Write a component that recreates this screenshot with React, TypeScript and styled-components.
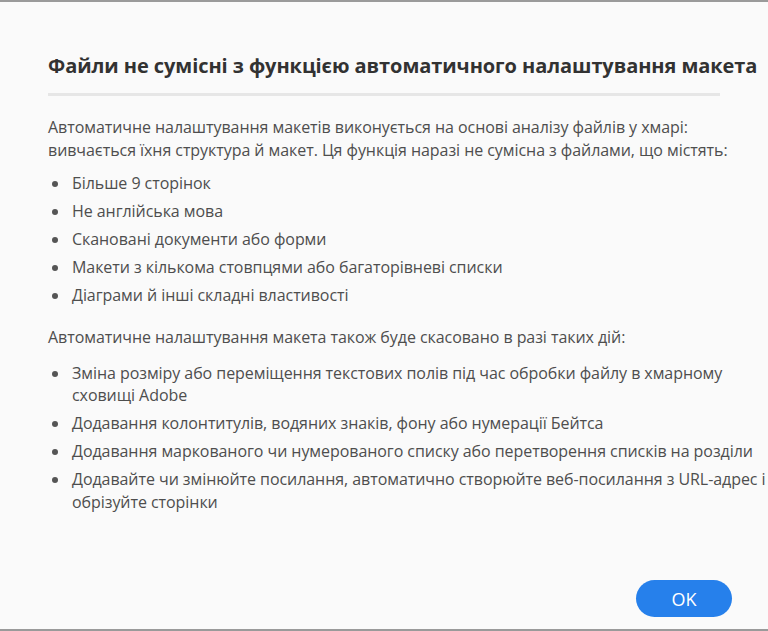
import React from 'react'
import styled, { createGlobalStyle } from 'styled-components'

const GlobalStyle = createGlobalStyle`
  html, body {
    margin: 0;
    padding: 0;
    background: #fafafa;
  }
  body {
    font-family: 'Open Sans', 'Noto Sans', sans-serif;
  }
`

const Dialog = styled.div`
  box-sizing: border-box;
  width: 768px;
  height: 631px;
  overflow: hidden;
  background: #fafafa;
  border-top: 2px solid #9a9a9a;
  border-bottom: 2px solid #9a9a9a;
  padding: 48px 0 12px 48px;
  display: flex;
  flex-direction: column;
`

const Title = styled.h2`
  margin: 0;
  font-size: 20px;
  font-weight: 700;
  line-height: 32px;
  letter-spacing: -0.07px;
  color: #323232;
  white-space: nowrap;
`

const Divider = styled.div`
  height: 3px;
  width: 672px;
  background: #e6e6e6;
  margin: 11px 0 20px;
`

const Body = styled.div`
  flex: 1;
  width: 720px;
  font-size: 16px;
  line-height: 23px;
  letter-spacing: -0.06px;
  color: #4e4e4e;
`

const Para = styled.p`
  margin: 0;
`

const List = styled.ul<{ $top: number }>`
  margin: ${({ $top }) => $top}px 0 19px;
  padding: 0;
  list-style: none;
`

const Item = styled.li`
  position: relative;
  padding-left: 24px;
  margin-bottom: 5.5px;
  line-height: 22.5px;

  &:before {
    content: '';
    position: absolute;
    left: 4px;
    top: 9px;
    width: 6px;
    height: 6px;
    border-radius: 50%;
    background: #555;
  }
`

const Footer = styled.div`
  display: flex;
  justify-content: flex-end;
  padding-right: 36px;
`

const OkButton = styled.button`
  width: 96px;
  height: 37px;
  border: none;
  border-radius: 19px;
  background: #2680eb;
  color: #fff;
  font-family: 'Open Sans', sans-serif;
  font-size: 18px;
  cursor: pointer;
`

const unsupported = [
  'Більше 9 сторінок',
  'Не англійська мова',
  'Скановані документи або форми',
  'Макети з кількома стовпцями або багаторівневі списки',
  'Діаграми й інші складні властивості',
]

const cancelled = [
  'Зміна розміру або переміщення текстових полів під час обробки файлу в хмарному сховищі Adobe',
  'Додавання колонтитулів, водяних знаків, фону або нумерації Бейтса',
  'Додавання маркованого чи нумерованого списку або перетворення списків на розділи',
  'Додавайте чи змінюйте посилання, автоматично створюйте веб-посилання з URL-адрес і обрізуйте сторінки',
]

const App = () => (
  <>
    <GlobalStyle />
    <Dialog>
      <Title>Файли не сумісні з функцією автоматичного налаштування макета</Title>
      <Divider />
      <Body>
        <Para>
          Автоматичне налаштування макетів виконується на основі аналізу файлів у хмарі:
          <br />
          вивчається їхня структура й макет. Ця функція наразі не сумісна з файлами, що містять:
        </Para>
        <List $top={10}>
          {unsupported.map((t) => (
            <Item key={t}>{t}</Item>
          ))}
        </List>
        <Para>Автоматичне налаштування макета також буде скасовано в разі таких дій:</Para>
        <List $top={13}>
          {cancelled.map((t) => (
            <Item key={t}>{t}</Item>
          ))}
        </List>
      </Body>
      <Footer>
        <OkButton>OK</OkButton>
      </Footer>
    </Dialog>
  </>
)

export default App
